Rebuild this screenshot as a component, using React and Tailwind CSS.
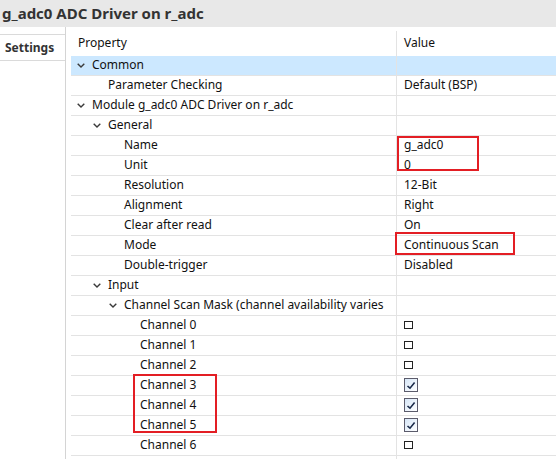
import React from "react";

const indent = {
  0: "pl-[6px]",
  1: "pl-[22px]",
  2: "pl-[38px]",
  3: "pl-[54px]",
};

const rows = [
  { label: "Common", level: 0, open: true, selected: true },
  { label: "Parameter Checking", level: 1, value: "Default (BSP)" },
  { label: "Module g_adc0 ADC Driver on r_adc", level: 0, open: true },
  { label: "General", level: 1, open: true },
  { label: "Name", level: 2, value: "g_adc0" },
  { label: "Unit", level: 2, value: "0" },
  { label: "Resolution", level: 2, value: "12-Bit" },
  { label: "Alignment", level: 2, value: "Right" },
  { label: "Clear after read", level: 2, value: "On" },
  { label: "Mode", level: 2, value: "Continuous Scan" },
  { label: "Double-trigger", level: 2, value: "Disabled" },
  { label: "Input", level: 1, open: true },
  { label: "Channel Scan Mask (channel availability varies", level: 2, open: true },
  { label: "Channel 0", level: 3, check: false },
  { label: "Channel 1", level: 3, check: false },
  { label: "Channel 2", level: 3, check: false },
  { label: "Channel 3", level: 3, check: true },
  { label: "Channel 4", level: 3, check: true },
  { label: "Channel 5", level: 3, check: true },
  { label: "Channel 6", level: 3, check: false },
  { label: "", level: 3 },
];

const Chevron = () => (
  <svg width="8" height="5" viewBox="0 0 8 5" className="block">
    <polyline points="0.7,0.7 4,4 7.3,0.7" fill="none" stroke="#3a3a3a" strokeWidth="1.4" />
  </svg>
);

const CheckBox = ({ checked }) => {
  if (!checked) {
    return <span className="block w-[9px] h-[8px] border border-[#222] bg-white" />;
  }
  return (
    <span className="flex items-center justify-center w-[14px] h-[14px] border border-[#5b5b6b] bg-gradient-to-br from-[#d6e6f7] to-white">
      <svg width="10" height="9" viewBox="0 0 10 9" className="block">
        <polyline points="1.5,5 4,7.2 8.6,1.6" fill="none" stroke="#1a2a4a" strokeWidth="1.6" />
      </svg>
    </span>
  );
};

const Row = ({ row }) => (
  <div
    className={`flex h-[20px] border-b border-[#e3e3e3] ${row.selected ? "bg-[#cce8ff]" : ""}`}
  >
    <div className={`w-[325px] flex items-center pb-[2px] overflow-hidden whitespace-nowrap ${indent[row.level]}`}>
      <span className="w-[15px] shrink-0 flex items-center pt-[2px]">{row.open && <Chevron />}</span>
      <span>{row.label}</span>
    </div>
    <div className="flex-1 flex items-center pl-[7px] pb-[1px] border-l border-[#e3e3e3]">
      {row.value}
      {row.check !== undefined && <CheckBox checked={row.check} />}
    </div>
  </div>
);

export default function App() {
  return (
    <div
      className="relative w-[556px] h-[459px] overflow-hidden bg-white text-[12px] text-[#111]"
      style={{ fontFamily: '"Noto Sans", "Liberation Sans", sans-serif' }}
    >
      <div className="h-[27px] bg-[#e8e8e8] flex items-center pl-[2px] pb-[1px] text-[15px] font-bold text-[#333]">
        g_adc0 ADC Driver on r_adc
      </div>
      <div className="flex h-[432px]">
        <div className="w-[66px] shrink-0 border-r border-[#d4d4d4] pt-[7px]">
          <div className="h-[27px] border-t border-b border-[#dadada] flex items-center pl-[5px] font-bold text-[#333]">
            Settings
          </div>
        </div>
        <div className="flex-1 ml-[5px] pt-[4px]">
          <div className="flex h-[25px]">
            <div className="w-[325px] flex items-center pl-[7px] pb-[1px]">Property</div>
            <div className="flex-1 flex items-center pl-[7px] pb-[1px] border-l border-[#e3e3e3]">Value</div>
          </div>
          {rows.map((r, i) => (
            <Row key={i} row={r} />
          ))}
        </div>
      </div>

      <div className="absolute left-[397px] top-[136px] w-[82px] h-[35px] border-2 border-[#e31e24]" />
      <div className="absolute left-[395px] top-[232px] w-[120px] h-[23px] border-2 border-[#e31e24]" />
      <div className="absolute left-[133px] top-[374px] w-[84px] h-[59px] border-2 border-[#e31e24]" />
    </div>
  );
}
